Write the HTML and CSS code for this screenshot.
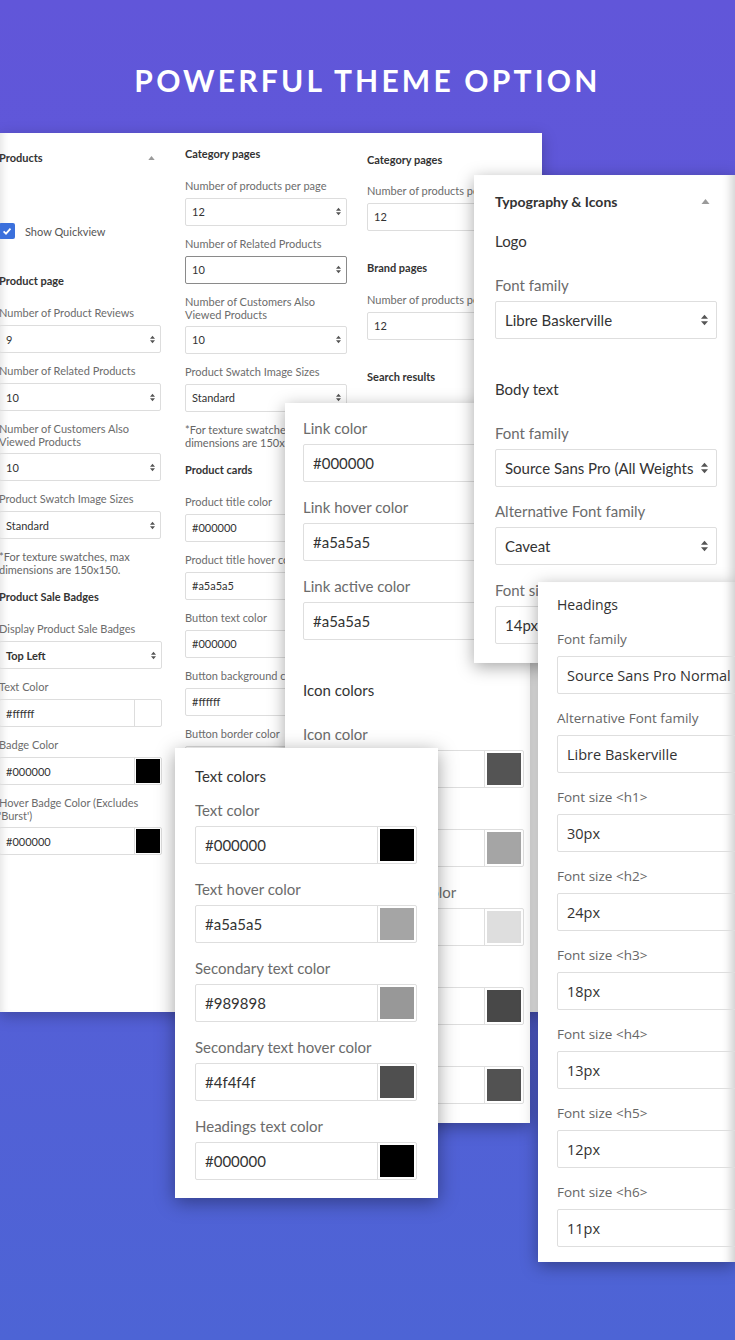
FILE: index.html
```html
<!DOCTYPE html>
<html>
<head>
<meta charset="utf-8">
<link rel="stylesheet" href="styles.css">
</head>
<body>
<div class="canvas">
  <h1 class="title">POWERFUL THEME OPTION</h1>

  <!-- back panel with three columns -->
  <div class="panel back">
    <div class="col col-a">
      <div class="s-headrow"><span class="s-head">Products</span><svg class="caret" viewBox="0 0 8 5"><path d="M0 5L4 0L8 5Z"/></svg></div>
      <div class="chk-row"><span class="chk"><svg viewBox="0 0 12 12"><path d="M2.6 6.3L5 8.6L9.5 3.7"/></svg></span><span>Show Quickview</span></div>
      <div class="s-head sp-a1">Product page</div>
      <div class="s-field"><div class="s-label">Number of Product Reviews</div><div class="s-input"><span class="val">9</span><svg class="step" viewBox="0 0 6 10"><path d="M0 4L3 0.5L6 4Z M0 6L3 9.5L6 6Z"/></svg></div></div>
      <div class="s-field"><div class="s-label">Number of Related Products</div><div class="s-input"><span class="val">10</span><svg class="step" viewBox="0 0 6 10"><path d="M0 4L3 0.5L6 4Z M0 6L3 9.5L6 6Z"/></svg></div></div>
      <div class="s-field"><div class="s-label two">Number of Customers Also<br>Viewed Products</div><div class="s-input"><span class="val">10</span><svg class="step" viewBox="0 0 6 10"><path d="M0 4L3 0.5L6 4Z M0 6L3 9.5L6 6Z"/></svg></div></div>
      <div class="s-field"><div class="s-label">Product Swatch Image Sizes</div><div class="s-input"><span class="val">Standard</span><svg class="step" viewBox="0 0 6 10"><path d="M0 4L3 0.5L6 4Z M0 6L3 9.5L6 6Z"/></svg></div></div>
      <div class="s-note">*For texture swatches, max<br>dimensions are 150x150.</div>
      <div class="s-head sp-a2">Product Sale Badges</div>
      <div class="s-field"><div class="s-label">Display Product Sale Badges</div><div class="s-input wide"><span class="val strong">Top Left</span><svg class="step" viewBox="0 0 6 10"><path d="M0 4L3 0.5L6 4Z M0 6L3 9.5L6 6Z"/></svg></div></div>
      <div class="s-field"><div class="s-label">Text Color</div><div class="s-input s-color wide"><span class="val">#ffffff</span><span class="s-sw"><span class="s-chip" style="background:#ffffff"></span></span></div></div>
      <div class="s-field"><div class="s-label">Badge Color</div><div class="s-input s-color wide"><span class="val">#000000</span><span class="s-sw"><span class="s-chip" style="background:#000000"></span></span></div></div>
      <div class="s-field"><div class="s-label two">Hover Badge Color (Excludes<br>'Burst')</div><div class="s-input s-color wide"><span class="val">#000000</span><span class="s-sw"><span class="s-chip" style="background:#000000"></span></span></div></div>
    </div>

    <div class="col col-b">
      <div class="s-head sp-b0">Category pages</div>
      <div class="s-field"><div class="s-label">Number of products per page</div><div class="s-input"><span class="val">12</span><svg class="step" viewBox="0 0 6 10"><path d="M0 4L3 0.5L6 4Z M0 6L3 9.5L6 6Z"/></svg></div></div>
      <div class="s-field"><div class="s-label">Number of Related Products</div><div class="s-input focus"><span class="val">10</span><svg class="step" viewBox="0 0 6 10"><path d="M0 4L3 0.5L6 4Z M0 6L3 9.5L6 6Z"/></svg></div></div>
      <div class="s-field"><div class="s-label two">Number of Customers Also<br>Viewed Products</div><div class="s-input"><span class="val">10</span><svg class="step" viewBox="0 0 6 10"><path d="M0 4L3 0.5L6 4Z M0 6L3 9.5L6 6Z"/></svg></div></div>
      <div class="s-field"><div class="s-label">Product Swatch Image Sizes</div><div class="s-input"><span class="val">Standard</span><svg class="step" viewBox="0 0 6 10"><path d="M0 4L3 0.5L6 4Z M0 6L3 9.5L6 6Z"/></svg></div></div>
      <div class="s-note">*For texture swatches, max<br>dimensions are 150x150.</div>
      <div class="s-head sp-a2">Product cards</div>
      <div class="s-field"><div class="s-label">Product title color</div><div class="s-input s-color"><span class="val">#000000</span><span class="s-sw"><span class="s-chip" style="background:#000000"></span></span></div></div>
      <div class="s-field"><div class="s-label">Product title hover color</div><div class="s-input s-color"><span class="val">#a5a5a5</span><span class="s-sw"><span class="s-chip" style="background:#a5a5a5"></span></span></div></div>
      <div class="s-field"><div class="s-label">Button text color</div><div class="s-input s-color"><span class="val">#000000</span><span class="s-sw"><span class="s-chip" style="background:#000000"></span></span></div></div>
      <div class="s-field"><div class="s-label">Button background color</div><div class="s-input s-color"><span class="val">#ffffff</span><span class="s-sw"><span class="s-chip" style="background:#ffffff"></span></span></div></div>
      <div class="s-field"><div class="s-label">Button border color</div><div class="s-input s-color"><span class="val">#000000</span><span class="s-sw"><span class="s-chip" style="background:#000000"></span></span></div></div>
    </div>

    <div class="col col-c">
      <div class="s-head sp-c0">Category pages</div>
      <div class="s-field"><div class="s-label">Number of products per page</div><div class="s-input"><span class="val">12</span></div></div>
      <div class="s-head sp-c1">Brand pages</div>
      <div class="s-field"><div class="s-label">Number of products per page</div><div class="s-input"><span class="val">12</span></div></div>
      <div class="s-head sp-c1">Search results</div>
      <div class="s-field"><div class="s-label">Number of products per page</div><div class="s-input"><span class="val">12</span></div></div>
    </div>
  </div>

  <!-- link colors panel -->
  <div class="panel link-panel">
    <div class="l-field"><div class="l-label">Link color</div><div class="l-input"><span class="val">#000000</span></div></div>
    <div class="l-field"><div class="l-label">Link hover color</div><div class="l-input"><span class="val">#a5a5a5</span></div></div>
    <div class="l-field"><div class="l-label">Link active color</div><div class="l-input"><span class="val">#a5a5a5</span></div></div>
    <div class="l-head sp-icons">Icon colors</div>
    <div class="l-field"><div class="l-label">Icon color</div><div class="l-input"><span class="val">#545454</span><span class="l-sw"><span class="l-chip" style="background:#545454"></span></span></div></div>
    <div class="l-field"><div class="l-label">Icon hover color</div><div class="l-input"><span class="val">#a5a5a5</span><span class="l-sw"><span class="l-chip" style="background:#a5a5a5"></span></span></div></div>
    <div class="l-field"><div class="l-label">Icon border hover color</div><div class="l-input"><span class="val">#dedede</span><span class="l-sw"><span class="l-chip" style="background:#dedede"></span></span></div></div>
    <div class="l-field"><div class="l-label">Icon active color</div><div class="l-input"><span class="val">#484848</span><span class="l-sw"><span class="l-chip" style="background:#484848"></span></span></div></div>
    <div class="l-field"><div class="l-label">Icon border color</div><div class="l-input"><span class="val">#525252</span><span class="l-sw"><span class="l-chip" style="background:#525252"></span></span></div></div>
  </div>

  <!-- typography panel -->
  <div class="panel typo-panel">
    <div class="t-headrow"><span class="t-head">Typography &amp; Icons</span><svg class="caret big" viewBox="0 0 8 5"><path d="M0 5L4 0L8 5Z"/></svg></div>
    <div class="l-head sp-logo">Logo</div>
    <div class="l-field sp-ff"><div class="l-label">Font family</div><div class="l-input"><span class="val">Libre Baskerville</span><svg class="step big" viewBox="0 0 6 10"><path d="M0 4L3 0.5L6 4Z M0 6L3 9.5L6 6Z"/></svg></div></div>
    <div class="l-head sp-body">Body text</div>
    <div class="l-field sp-ff t-tight"><div class="l-label">Font family</div><div class="l-input"><span class="val">Source Sans Pro (All Weights</span><svg class="step big" viewBox="0 0 6 10"><path d="M0 4L3 0.5L6 4Z M0 6L3 9.5L6 6Z"/></svg></div></div>
    <div class="l-field"><div class="l-label">Alternative Font family</div><div class="l-input"><span class="val">Caveat</span><svg class="step big" viewBox="0 0 6 10"><path d="M0 4L3 0.5L6 4Z M0 6L3 9.5L6 6Z"/></svg></div></div>
    <div class="l-field"><div class="l-label">Font size</div><div class="l-input"><span class="val">14px</span></div></div>
  </div>

  <!-- headings panel -->
  <div class="panel head-panel">
    <div class="h-title">Headings</div>
    <div class="h-field first"><div class="h-label">Font family</div><div class="h-input">Source Sans Pro Normal</div></div>
    <div class="h-field"><div class="h-label">Alternative Font family</div><div class="h-input">Libre Baskerville</div></div>
    <div class="h-field"><div class="h-label">Font size &lt;h1&gt;</div><div class="h-input">30px</div></div>
    <div class="h-field"><div class="h-label">Font size &lt;h2&gt;</div><div class="h-input">24px</div></div>
    <div class="h-field"><div class="h-label">Font size &lt;h3&gt;</div><div class="h-input">18px</div></div>
    <div class="h-field"><div class="h-label">Font size &lt;h4&gt;</div><div class="h-input">13px</div></div>
    <div class="h-field"><div class="h-label">Font size &lt;h5&gt;</div><div class="h-input">12px</div></div>
    <div class="h-field"><div class="h-label">Font size &lt;h6&gt;</div><div class="h-input">11px</div></div>
  </div>

  <!-- text colors panel -->
  <div class="panel text-panel">
    <div class="l-head sp-tc">Text colors</div>
    <div class="l-field"><div class="l-label">Text color</div><div class="l-input"><span class="val">#000000</span><span class="l-sw"><span class="l-chip" style="background:#000000"></span></span></div></div>
    <div class="l-field"><div class="l-label">Text hover color</div><div class="l-input"><span class="val">#a5a5a5</span><span class="l-sw"><span class="l-chip" style="background:#a5a5a5"></span></span></div></div>
    <div class="l-field"><div class="l-label">Secondary text color</div><div class="l-input"><span class="val">#989898</span><span class="l-sw"><span class="l-chip" style="background:#989898"></span></span></div></div>
    <div class="l-field"><div class="l-label">Secondary text hover color</div><div class="l-input"><span class="val">#4f4f4f</span><span class="l-sw"><span class="l-chip" style="background:#4f4f4f"></span></span></div></div>
    <div class="l-field"><div class="l-label">Headings text color</div><div class="l-input"><span class="val">#000000</span><span class="l-sw"><span class="l-chip" style="background:#000000"></span></span></div></div>
  </div>
</div>
</body>
</html>
```

FILE: styles.css
```css
html, body {
  margin: 0;
  padding: 0;
}
body {
  width: 735px;
  height: 1340px;
  overflow: hidden;
  font-family: Lato, "Liberation Sans", sans-serif;
  background: linear-gradient(180deg, #6156d9 0%, #5a5bd8 50%, #4d64d5 100%);
}
.canvas {
  position: relative;
  width: 735px;
  height: 1340px;
  overflow: hidden;
}
.title {
  margin: 0;
  padding-top: 63px;
  text-align: center;
  color: #fff;
  font-family: Lato, "Open Sans", sans-serif;
  font-weight: 700;
  font-size: 30px;
  line-height: 34px;
  letter-spacing: 3.2px;
}

/* panels */
.panel {
  position: absolute;
  background: #fff;
  box-sizing: border-box;
  overflow: hidden;
  display: flex;
  flex-direction: column;
  align-items: flex-start;
}
.back {
  left: 0;
  top: 133px;
  width: 542px;
  height: 879px;
  flex-direction: row;
  z-index: 1;
  box-shadow: inset 8px 0 8px -6px rgba(0,0,0,0.12), 0 4px 14px rgba(0,0,0,0.25);
}
.link-panel {
  left: 285px;
  top: 403px;
  width: 245px;
  height: 720px;
  padding: 15px 6px 0 18px;
  z-index: 2;
  box-shadow: 0 4px 16px rgba(0,0,0,0.35);
}
.typo-panel {
  left: 474px;
  top: 175px;
  width: 261px;
  height: 488px;
  padding: 16px 0 0 21px;
  z-index: 3;
  box-shadow: inset -12px 0 10px -8px rgba(0,0,0,0.18), 0 4px 16px rgba(0,0,0,0.35);
}
.head-panel {
  left: 538px;
  top: 582px;
  width: 197px;
  height: 680px;
  padding: 13px 0 0 19px;
  z-index: 4;
  box-shadow: inset -12px 0 10px -8px rgba(0,0,0,0.2), 0 4px 16px rgba(0,0,0,0.35);
}
.text-panel {
  left: 175px;
  top: 748px;
  width: 263px;
  height: 450px;
  padding: 18px 0 0 20px;
  z-index: 5;
  box-shadow: 0 4px 18px rgba(0,0,0,0.38);
}

/* back panel columns */
.col {
  flex: none;
  width: 162px;
  display: flex;
  flex-direction: column;
}
.col-a { margin-left: -1px; padding-top: 18px; }
.col-b { margin-left: 24px; padding-top: 13.5px; }
.col-c { margin-left: 20px; padding-top: 19.5px; width: 175px; }

.s-headrow {
  display: flex;
  justify-content: space-between;
  align-items: center;
  height: 13px;
}
.s-head {
  font-size: 11px;
  line-height: 13px;
  font-weight: 700;
  color: #333;
}
.caret {
  width: 7px;
  height: 4px;
  margin-right: 6px;
  fill: #9a9a9a;
}
.caret.big {
  width: 9px;
  height: 5px;
  margin-right: 7px;
}
.chk-row {
  display: flex;
  align-items: center;
  gap: 10px;
  margin-top: 59px;
  height: 16px;
  font-size: 11px;
  color: #555;
}
.chk {
  width: 16px;
  height: 16px;
  border-radius: 2px;
  background: #3b70dc;
  display: flex;
  align-items: center;
  justify-content: center;
}
.chk svg {
  width: 12px;
  height: 12px;
  fill: none;
  stroke: #fff;
  stroke-width: 1.8;
}
.sp-a1 { margin-top: 35px; margin-bottom: 19px; }
.sp-a2 { margin-top: 14px; margin-bottom: 19px; }
.sp-b0 { margin-bottom: 19px; }
.sp-c0 { margin-bottom: 18px; }
.sp-c1 { margin-top: 19px; margin-bottom: 19px; }

.s-field { margin-bottom: 11px; }
.s-label {
  font-size: 11px;
  line-height: 13px;
  color: #6c6c6c;
  margin-bottom: 6px;
}
.s-label.two { margin-bottom: 5px; }
.s-input {
  height: 28px;
  box-sizing: border-box;
  border: 1px solid #dddddd;
  border-radius: 2px;
  display: flex;
  align-items: center;
  padding-left: 6px;
  font-size: 11px;
  color: #333;
}
.s-input.wide { margin-right: -1px; }
.s-input.focus { border-color: #8a8a8a; }
.s-input .val { flex: 1; }
.s-input .val.strong { font-weight: 700; color: #333; }
.step {
  width: 5px;
  height: 9px;
  margin-right: 5px;
  fill: #555;
}
.step.big {
  width: 7px;
  height: 12px;
  margin-right: 8px;
}
.s-color { padding-right: 0; }
.s-sw {
  flex: none;
  width: 27px;
  height: 100%;
  box-sizing: border-box;
  border-left: 1px solid #dddddd;
  padding: 1px;
}
.s-chip {
  display: block;
  width: 100%;
  height: 100%;
}
.s-note {
  font-size: 11px;
  line-height: 13px;
  color: #666;
}

/* large fields */
.l-head {
  font-size: 15px;
  line-height: 20px;
  color: #333;
}
.l-field { margin-bottom: 15px; }
.l-label {
  font-size: 15px;
  line-height: 20px;
  color: #6b6b6b;
  margin-bottom: 6px;
  white-space: nowrap;
}
.l-input {
  width: 222px;
  height: 38px;
  box-sizing: border-box;
  border: 1px solid #dedede;
  border-radius: 2px;
  display: flex;
  align-items: center;
  padding-left: 9px;
  font-size: 15px;
  color: #333;
  white-space: nowrap;
}
.link-panel .l-input { width: 221px; }
.l-input .val {
  flex: 1;
  overflow: hidden;
}
.l-sw {
  flex: none;
  width: 39px;
  height: 100%;
  box-sizing: border-box;
  border-left: 1px solid #dedede;
  padding: 2px;
}
.l-chip {
  display: block;
  width: 100%;
  height: 100%;
}
.sp-icons { margin-top: 25px; margin-bottom: 24px; }
.sp-tc { margin-bottom: 14px; }

/* typography panel */
.t-headrow {
  width: 222px;
  display: flex;
  justify-content: space-between;
  align-items: center;
  height: 20px;
}
.t-head {
  font-size: 14px;
  font-weight: 700;
  color: #333;
}
.sp-logo { margin-top: 20px; }
.sp-ff { margin-top: 24px; }
.sp-body { margin-top: 25px; }
.typo-panel .t-tight { margin-bottom: 14px; }

/* headings panel */
.h-title {
  font-family: "Open Sans", sans-serif;
  font-size: 14px;
  line-height: 20px;
  color: #333;
}
.h-field { margin-bottom: 14px; }
.h-field.first { margin-top: 14px; }
.h-label {
  font-family: "Open Sans", sans-serif;
  font-size: 13.5px;
  line-height: 20px;
  color: #666;
  margin-bottom: 7px;
  white-space: nowrap;
}
.h-input {
  width: 200px;
  height: 38px;
  box-sizing: border-box;
  border: 1px solid #dedede;
  border-radius: 2px;
  display: flex;
  align-items: center;
  padding-left: 9px;
  font-family: "Open Sans", sans-serif;
  font-size: 14.5px;
  color: #333;
  white-space: nowrap;
}
```
